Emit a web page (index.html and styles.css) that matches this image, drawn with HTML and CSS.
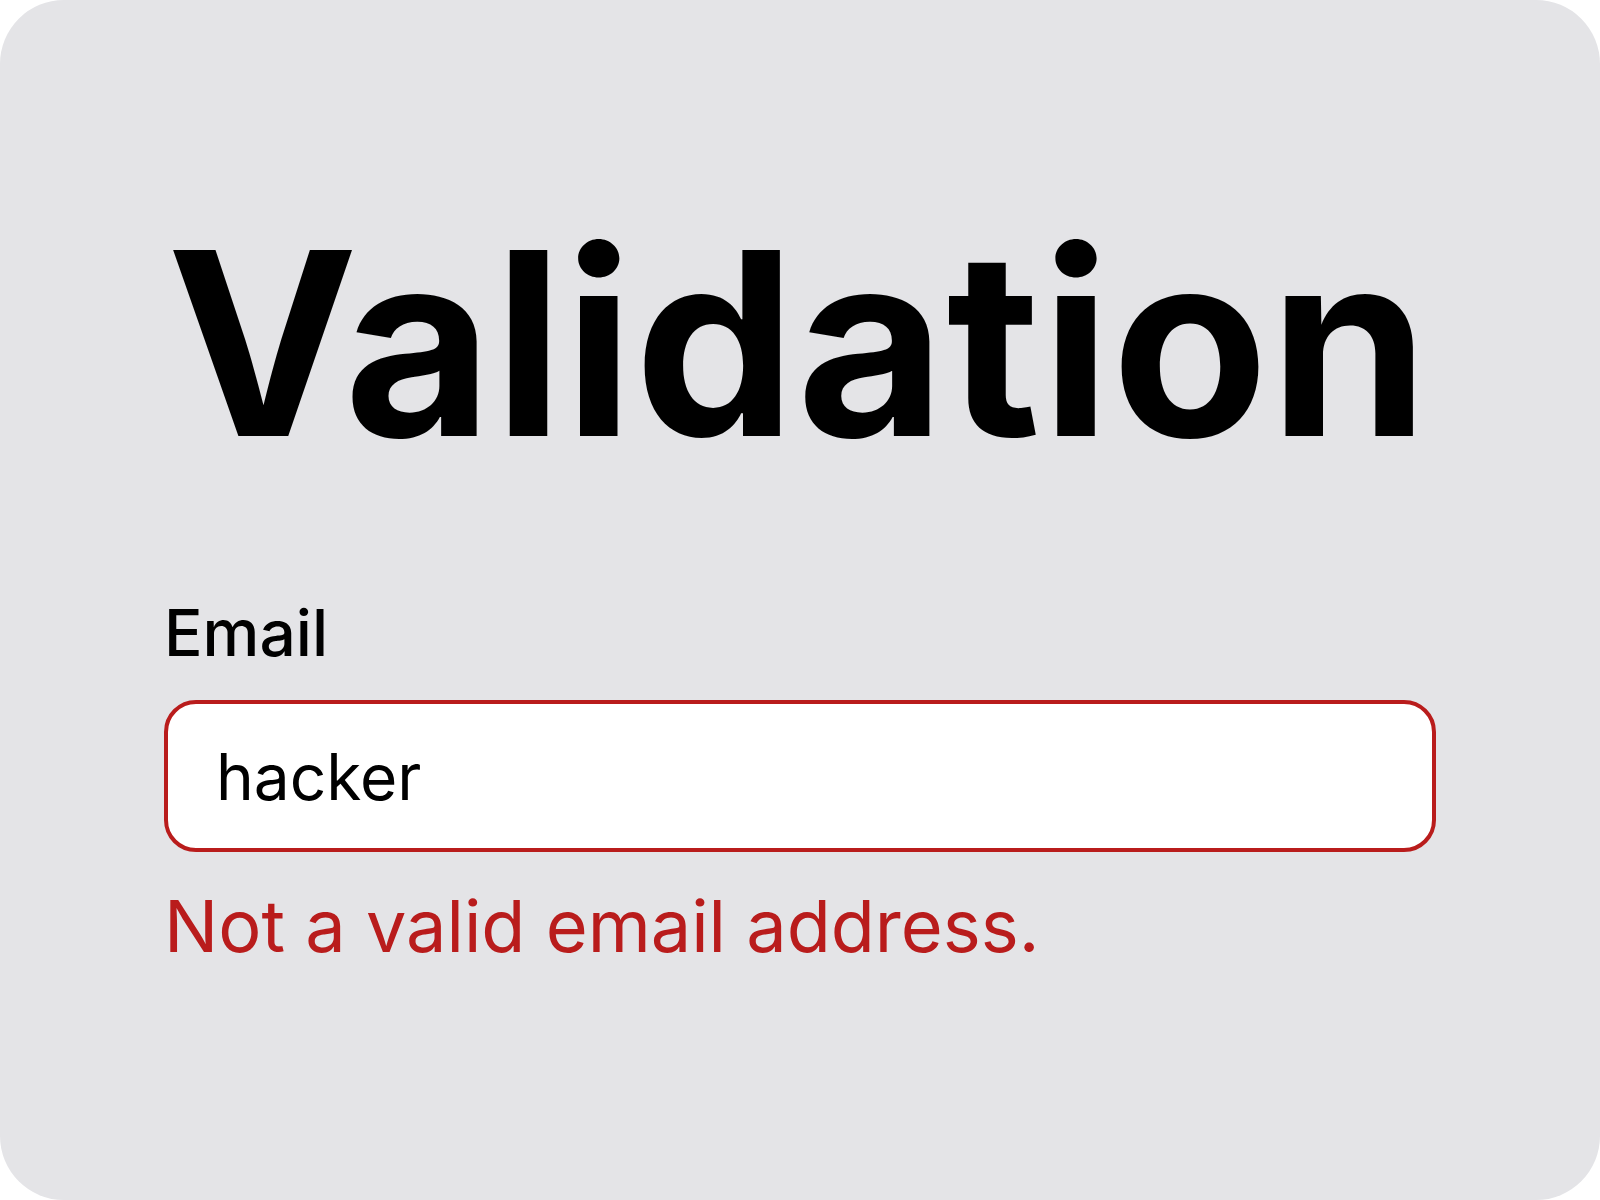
FILE: index.html
```html
<!DOCTYPE html>
<html lang="en">
<head>
<meta charset="utf-8">
<title>Validation</title>
<link rel="stylesheet" href="styles.css">
</head>
<body>
<main class="card">
  <h1 class="title">Validation</h1>
  <form class="field">
    <label class="label" for="email">Email</label>
    <input class="input" id="email" type="text" value="hacker">
    <p class="error">Not a valid email address.</p>
  </form>
</main>
</body>
</html>
```

FILE: styles.css
```css
html, body {
  margin: 0;
  padding: 0;
  background: #ffffff;
}

body {
  width: 1600px;
  height: 1200px;
  font-family: Inter, "Noto Sans", sans-serif;
  color: #000000;
}

.card {
  box-sizing: border-box;
  width: 1600px;
  height: 1200px;
  background: #e4e4e7;
  border-radius: 64px;
  padding: 215px 164px 0 164px;
  display: flex;
  flex-direction: column;
}

.title {
  margin: 0 0 0 3px;
  font-size: 256px;
  line-height: 1;
  font-weight: 700;
  letter-spacing: 1px;
  white-space: nowrap;
}

.field {
  margin: 130px 0 0 0;
  display: flex;
  flex-direction: column;
}

.label {
  font-size: 64px;
  line-height: 1;
  font-weight: 500;
}

.input {
  box-sizing: border-box;
  margin-top: 35px;
  width: 100%;
  height: 152px;
  padding: 0 48px;
  border: 4px solid #b91c1c;
  border-radius: 32px;
  background: #ffffff;
  font-family: Inter, "Noto Sans", sans-serif;
  font-size: 64px;
  color: #000000;
  outline: none;
}

.error {
  margin: 38px 0 0 0;
  font-size: 72px;
  line-height: 1;
  font-weight: 400;
  color: #b91c1c;
}
```
